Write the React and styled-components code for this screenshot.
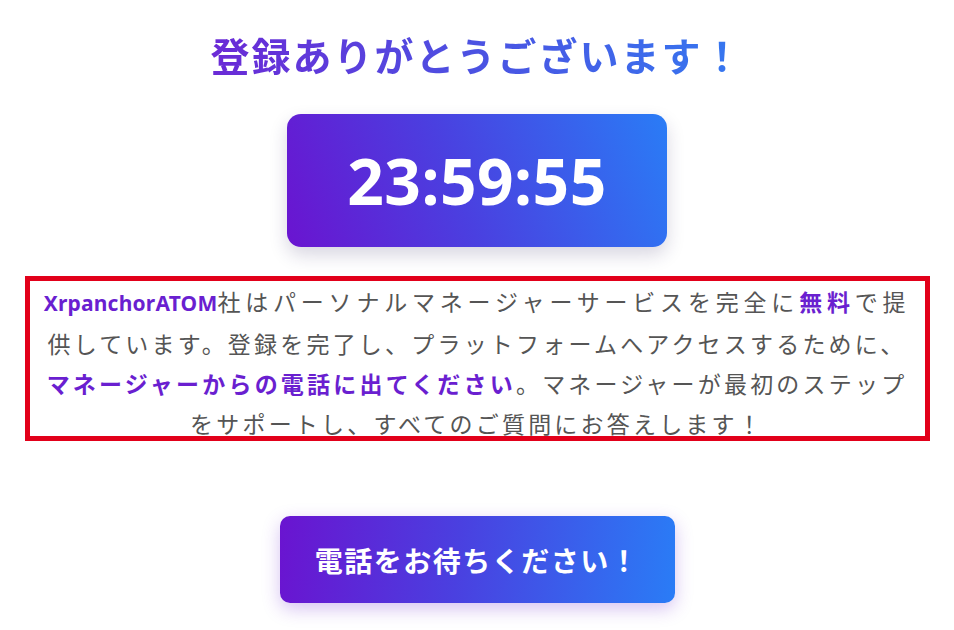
import styled, { createGlobalStyle } from 'styled-components';

const GlobalStyle = createGlobalStyle`
  html, body {
    margin: 0;
    padding: 0;
    background: #ffffff;
  }
  body {
    font-family: "Noto Sans", "Noto Sans CJK JP", sans-serif;
  }
`;

const Page = styled.div`
  width: 954px;
  height: 630px;
  overflow: hidden;
  display: flex;
  flex-direction: column;
  align-items: center;
  padding-top: 30px;
  box-sizing: border-box;
`;

const Heading = styled.h1`
  margin: 0;
  font-family: "Noto Sans CJK JP", sans-serif;
  font-size: 39px;
  line-height: 48px;
  font-weight: 700;
  letter-spacing: 2px;
  background: linear-gradient(90deg, #6b2ad6 0%, #4b52e2 50%, #3578f0 100%);
  -webkit-background-clip: text;
  background-clip: text;
  color: transparent;
`;

const Timer = styled.div`
  margin-top: 36px;
  width: 380px;
  height: 133px;
  border-radius: 14px;
  background: linear-gradient(70deg, #6a14d0 0%, #4a40e0 45%, #2a7cf6 100%);
  box-shadow: 0 8px 18px rgba(40, 30, 90, 0.18);
  display: flex;
  align-items: center;
  justify-content: center;
  color: #ffffff;
  font-family: "Noto Sans", sans-serif;
  font-weight: 700;
  font-size: 64px;
  letter-spacing: 0.5px;
`;

const Notice = styled.div`
  margin-top: 29px;
  width: 905px;
  height: 165px;
  box-sizing: border-box;
  border: 5px solid #e2001a;
  overflow: hidden;
  padding: 0 8px;
`;

const Text = styled.p`
  margin: 0;
  text-align: center;
  font-family: "Noto Sans CJK JP", sans-serif;
  font-size: 23px;
  line-height: 40px;
  letter-spacing: 3.2px;
  color: #555555;
  white-space: nowrap;
`;

const Line = styled.span`
  display: block;
  letter-spacing: ${(p) => p.$spacing || 'inherit'};
`;

const Mark = styled.span`
  color: #6a1fd0;
  font-weight: 700;
  font-family: ${(p) => (p.$latin ? '"Noto Sans", sans-serif' : '"Noto Sans CJK JP", sans-serif')};
  font-size: ${(p) => (p.$latin ? '21px' : 'inherit')};
  letter-spacing: ${(p) => (p.$latin ? '0.2px' : 'inherit')};
`;

const CallButton = styled.button`
  margin-top: 75px;
  width: 395px;
  height: 87px;
  border: none;
  border-radius: 10px;
  background: linear-gradient(95deg, #6a14d0 0%, #4a40e0 45%, #2a7cf6 100%);
  box-shadow: 0 6px 18px rgba(106, 40, 210, 0.28);
  color: #ffffff;
  font-family: "Noto Sans CJK JP", sans-serif;
  font-weight: 700;
  font-size: 28px;
  letter-spacing: 1.5px;
  cursor: pointer;
`;

const App = () => {
  return (
    <>
      <GlobalStyle />
      <Page>
        <Heading>登録ありがとうございます！</Heading>
        <Timer>23:59:55</Timer>
        <Notice>
          <Text>
            <Line $spacing="4.8px">
              <Mark $latin>XrpanchorATOM</Mark>社はパーソナルマネージャーサービスを完全に<Mark>無料</Mark>で提
            </Line>
            <Line>供しています。登録を完了し、プラットフォームへアクセスするために、</Line>
            <Line>
              <Mark>マネージャーからの電話に出てください</Mark>。マネージャーが最初のステップ
            </Line>
            <Line>をサポートし、すべてのご質問にお答えします！</Line>
          </Text>
        </Notice>
        <CallButton>電話をお待ちください！</CallButton>
      </Page>
    </>
  );
};

export default App;
